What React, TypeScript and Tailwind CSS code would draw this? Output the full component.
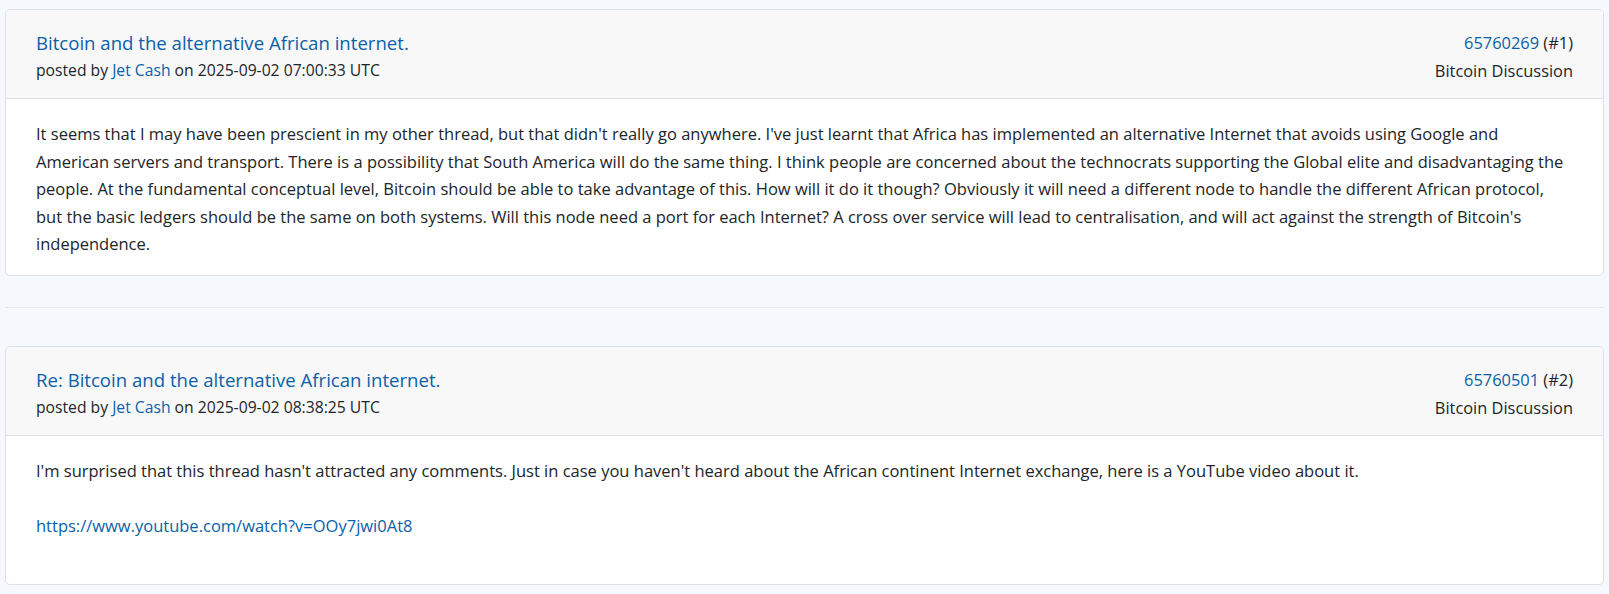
const font = '"Open Sans", "Noto Sans", sans-serif';

interface Post {
  title: string;
  author: string;
  date: string;
  id: string;
  index: number;
  board: string;
  body: React.ReactNode;
}

const posts: Post[] = [
  {
    title: 'Bitcoin and the alternative African internet.',
    author: 'Jet Cash',
    date: '2025-09-02 07:00:33 UTC',
    id: '65760269',
    index: 1,
    board: 'Bitcoin Discussion',
    body: (
      <>
        It seems that I may have been prescient in my other thread, but that didn't really go anywhere. I've just learnt
        that Africa has implemented an alternative Internet that avoids using Google and American servers and transport.
        There is a possibility that South America will do the same thing. I think people are concerned about the
        technocrats supporting the Global elite and disadvantaging the people. At the fundamental conceptual level,
        Bitcoin should be able to take advantage of this. How will it do it though? Obviously it will need a different
        node to handle the different African protocol, but the basic ledgers should be the same on both systems. Will
        this node need a port for each Internet? A cross over service will lead to centralisation, and will act against
        the strength of Bitcoin's independence.
      </>
    ),
  },
  {
    title: 'Re: Bitcoin and the alternative African internet.',
    author: 'Jet Cash',
    date: '2025-09-02 08:38:25 UTC',
    id: '65760501',
    index: 2,
    board: 'Bitcoin Discussion',
    body: (
      <>
        I'm surprised that this thread hasn't attracted any comments. Just in case you haven't heard about the African
        continent Internet exchange, here is a YouTube video about it.
        <br />
        <br />
        <a href="#" className="text-[#0b60a8]">
          https://www.youtube.com/watch?v=OOy7jwi0At8
        </a>
        <br />
        <br />
      </>
    ),
  },
];

function PostCard({ post }: { post: Post }) {
  return (
    <div className="rounded-[5px] border border-[#dfe0e1] bg-white overflow-hidden">
      {/* ヘッダー */}
      <div className="flex justify-between border-b border-[#dfe0e1] bg-[#f8f8f8] px-[30px] pt-[18px] pb-[14px]">
        <div>
          <a href="#" className="block text-[18.6px] leading-[29px] text-[#0b60a8]">
            {post.title}
          </a>
          <div className="text-[15.7px] leading-[27px] text-[#212529]">
            posted by{' '}
            <a href="#" className="text-[#0b60a8]">
              {post.author}
            </a>{' '}
            on {post.date}
          </div>
        </div>
        <div className="text-right text-[16.4px] text-[#212529]">
          <div className="leading-[29px]">
            <a href="#" className="text-[#0b60a8]">
              {post.id}
            </a>{' '}
            (#{post.index})
          </div>
          <div className="leading-[27px]">{post.board}</div>
        </div>
      </div>
      {/* 本文 */}
      <div className="px-[30px] pt-[21px] pb-[17px] text-[16.5px] leading-[27.6px] text-[#212529]">{post.body}</div>
    </div>
  );
}

export default function App() {
  return (
    <div className="min-h-[594px] bg-[#f5f8fc] px-[5px] pt-[9px] pb-[10px]" style={{ fontFamily: font }}>
      <PostCard post={posts[0]} />
      <hr className="mt-[31px] mb-[38px] border-0 border-t border-[#e3e6ea]" />
      <PostCard post={posts[1]} />
    </div>
  );
}
